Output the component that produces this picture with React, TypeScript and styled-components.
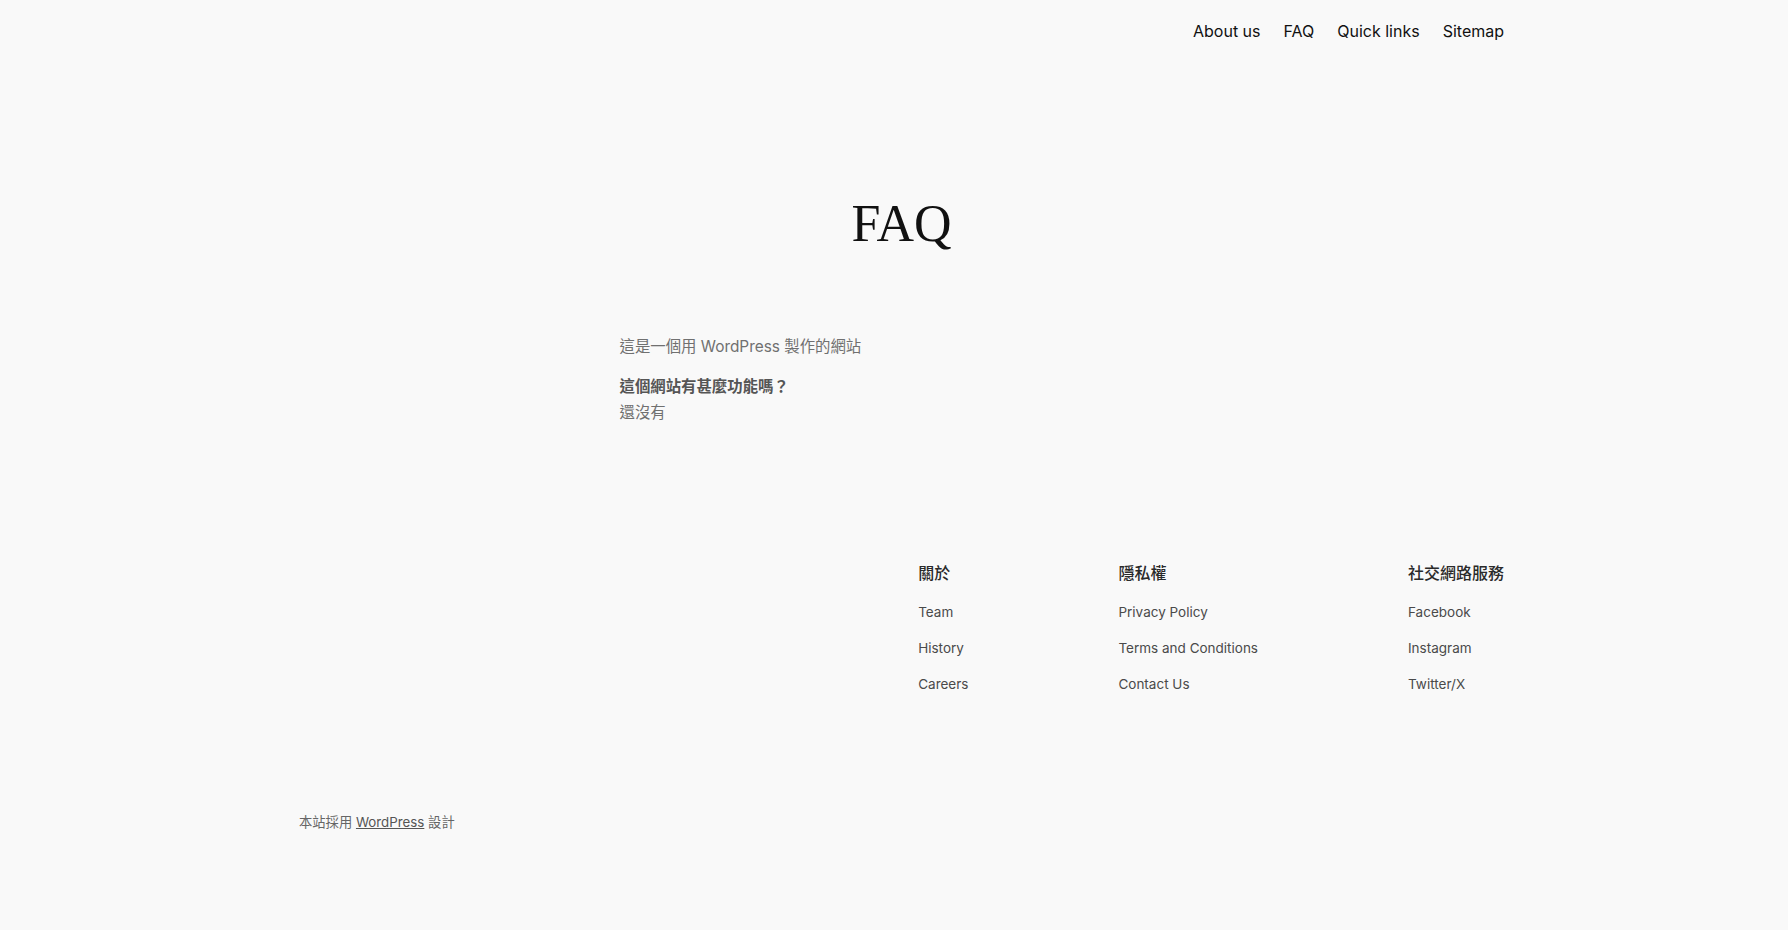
import React from "react";
import styled, { createGlobalStyle } from "styled-components";

const Global = createGlobalStyle`
  html, body { margin: 0; padding: 0; background: #f9f9f9; }
  body { font-family: Inter, "Noto Sans CJK TC", sans-serif; color: #111111; }
  * { box-sizing: border-box; }
`;

const Page = styled.div`
  min-height: 930px;
  padding: 0 284px 0 299px;
  display: flex;
  flex-direction: column;
`;

const Header = styled.header`
  display: flex;
  justify-content: flex-end;
  height: 62px;
  align-items: center;
`;

const Nav = styled.nav`
  display: flex;
  gap: 23px;
`;

const NavLink = styled.a`
  font-size: 16px;
  color: #111111;
  text-decoration: none;
  font-family: Inter, sans-serif;
`;

const Main = styled.main`
  display: flex;
  flex-direction: column;
  align-items: center;
  padding-top: 130px;
`;

const Title = styled.h1`
  margin: 0;
  font-family: "Liberation Serif", "DejaVu Serif", serif;
  font-weight: 400;
  font-size: 52px;
  line-height: 64px;
  color: #111111;
`;

const Content = styled.div`
  width: 564px;
  margin-top: 77px;
  font-size: 15.4px;
  color: #707070;
  font-family: Inter, "Noto Sans CJK TC", sans-serif;
`;

const Para = styled.p`
  margin: 0;
  line-height: 28px;
`;

const QA = styled.div`
  margin-top: 13px;
  line-height: 26px;
`;

const Question = styled.div`
  font-weight: 600;
  color: #555555;
`;

const Footer = styled.footer`
  display: flex;
  justify-content: flex-end;
  gap: 150px;
  margin-top: 135px;
`;

const Column = styled.div`
  display: flex;
  flex-direction: column;
`;

const ColTitle = styled.h2`
  margin: 0 0 9px 0;
  font-size: 16px;
  font-weight: 500;
  line-height: 24px;
  color: #2a2a2a;
  font-family: Inter, "Noto Sans CJK TC", sans-serif;
`;

const FootLink = styled.a`
  font-size: 13.5px;
  line-height: 36px;
  color: #4a4a4a;
  text-decoration: none;
`;

const Credit = styled.div`
  margin-top: 110px;
  font-size: 13.3px;
  color: #666666;
  font-family: Inter, "Noto Sans CJK TC", sans-serif;
  a { color: #555555; text-decoration: underline; }
`;

const groups = [
  { title: "關於", links: ["Team", "History", "Careers"] },
  { title: "隱私權", links: ["Privacy Policy", "Terms and Conditions", "Contact Us"] },
  { title: "社交網路服務", links: ["Facebook", "Instagram", "Twitter/X"] },
];

export default function App() {
  return (
    <>
      <Global />
      <Page>
        <Header>
          <Nav>
            <NavLink href="#">About us</NavLink>
            <NavLink href="#">FAQ</NavLink>
            <NavLink href="#">Quick links</NavLink>
            <NavLink href="#">Sitemap</NavLink>
          </Nav>
        </Header>
        <Main>
          <Title>FAQ</Title>
          <Content>
            <Para>這是一個用 WordPress 製作的網站</Para>
            <QA>
              <Question>這個網站有甚麼功能嗎？</Question>
              <div>還沒有</div>
            </QA>
          </Content>
        </Main>
        <Footer>
          {groups.map((g) => (
            <Column key={g.title}>
              <ColTitle>{g.title}</ColTitle>
              {g.links.map((l) => (
                <FootLink key={l} href="#">{l}</FootLink>
              ))}
            </Column>
          ))}
        </Footer>
        <Credit>
          本站採用 <a href="#">WordPress</a> 設計
        </Credit>
      </Page>
    </>
  );
}
